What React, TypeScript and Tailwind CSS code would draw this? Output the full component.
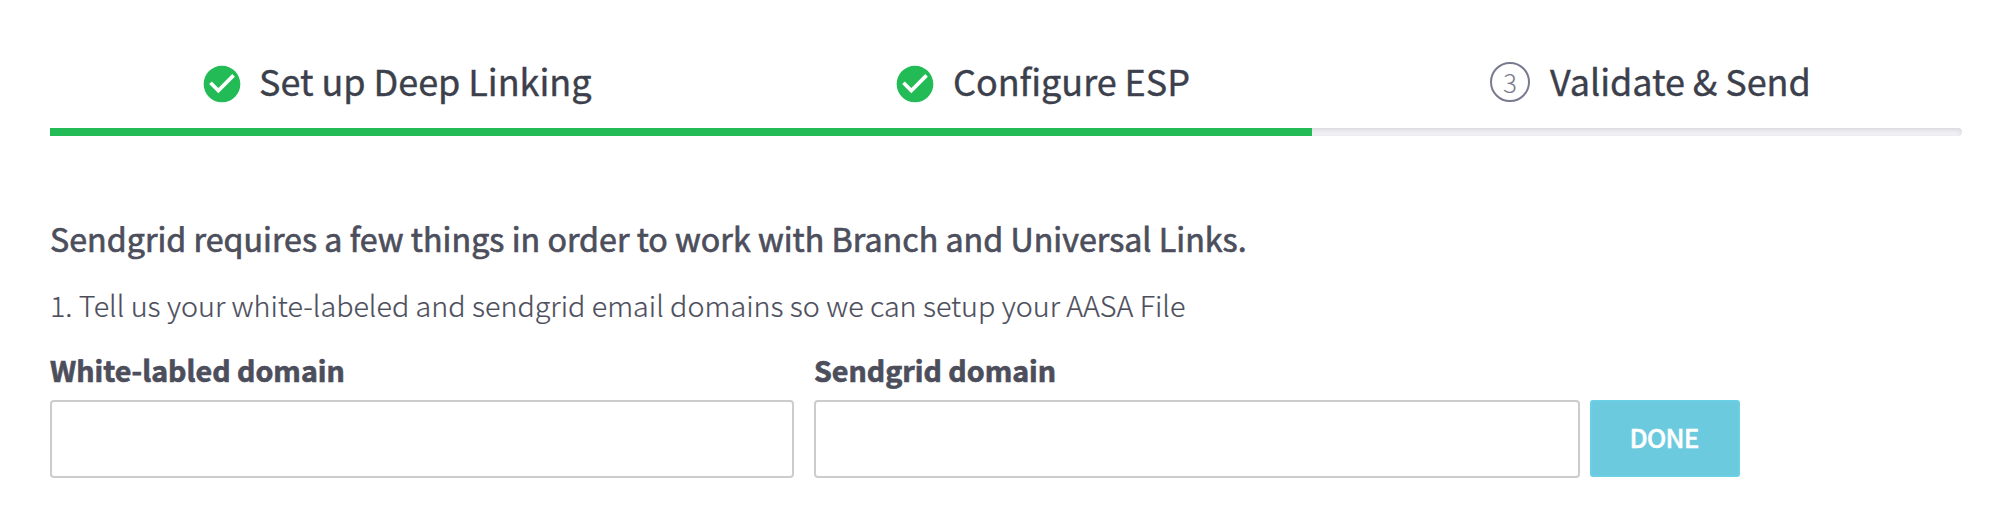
import type { ReactNode } from 'react';

function CheckCircle() {
  return (
    <svg viewBox="0 0 24 24" className="mt-[6px] size-[44px] shrink-0" aria-hidden="true">
      <path
        fill="#22bb55"
        d="M12 2C6.48 2 2 6.48 2 12s4.48 10 10 10 10-4.48 10-10S17.52 2 12 2zm-2 15l-5-5 1.41-1.41L10 14.17l7.59-7.59L19 8l-9 9z"
      />
    </svg>
  );
}

function StepTitle({ children }: { children: ReactNode }) {
  return (
    <span className="text-[36px] leading-[48px] tracking-[-0.05px] whitespace-nowrap text-[#3c3f4c] [-webkit-text-stroke:0.4px_#3c3f4c]">
      {children}
    </span>
  );
}

function DomainField({ label, width }: { label: string; width: string }) {
  return (
    <label className={`flex flex-col text-[28.6px] leading-[40px] font-bold [-webkit-text-stroke:0.7px_#4c4e5c] ${width}`}>
      {label}
      <input className="mt-[10px] h-[78px] rounded-[4px] border-2 border-[#cccccc]" />
    </label>
  );
}

export default function App() {
  return (
    <main className="h-[524px] w-[2004px] bg-white pt-[56px] pl-[50px] font-['Noto_Sans_CJK_SC','Source_Sans_Pro',sans-serif] text-[#4c4e5c]">
      <ol className="flex h-[72px]">
        <li className="flex w-[690px] gap-[15px] pl-[150px]">
          <CheckCircle />
          <StepTitle>Set up Deep Linking</StepTitle>
        </li>
        <li className="flex w-[622px] gap-[16px] pl-[153px]">
          <CheckCircle />
          <StepTitle>Configure ESP</StepTitle>
        </li>
        <li className="flex w-[600px] gap-[20px] pl-[128px]">
          <span className="mt-[6px] flex size-[40px] shrink-0 items-center justify-center rounded-full border-2 border-[#787a8e] text-[26px] leading-[36px] font-light text-[#787a8e]">
            3
          </span>
          <StepTitle>Validate &amp; Send</StepTitle>
        </li>
      </ol>
      <div className="h-2 w-[1912px] overflow-hidden rounded-r-[4px] bg-[#f0f0f5] shadow-[inset_0_2px_4px_rgba(0,0,0,0.1)]">
        <div className="h-full w-[1262px] bg-[#22bb55]" />
      </div>

      <h2 className="mt-[78px] text-[32.2px] leading-[48px] tracking-[0.025px] whitespace-nowrap [-webkit-text-stroke:0.7px_#4c4e5c]">
        Sendgrid requires a few things in order to work with Branch and Universal Links.
      </h2>
      <p className="mt-[23px] text-[28.7px] leading-[40px] font-light whitespace-nowrap [-webkit-text-stroke:0.2px_#4c4e5c]">
        1. Tell us your white-labeled and sendgrid email domains so we can setup your AASA File
      </p>
      <form className="mt-[25px] flex items-end">
        <DomainField label="White-labled domain" width="w-[744px]" />
        <div className="ml-[20px]">
          <DomainField label="Sendgrid domain" width="w-[766px]" />
        </div>
        <button
          type="button"
          className="mb-px ml-[10px] flex h-[77px] w-[150px] items-center justify-center rounded-[3px] border-2 border-[#6bd0e6] bg-[#6bcade] pr-[2px] pb-[3px] text-[26px] leading-[40px] font-medium tracking-[-0.9px] text-white [-webkit-text-stroke:0.4px_white]"
        >
          DONE
        </button>
      </form>
    </main>
  );
}
